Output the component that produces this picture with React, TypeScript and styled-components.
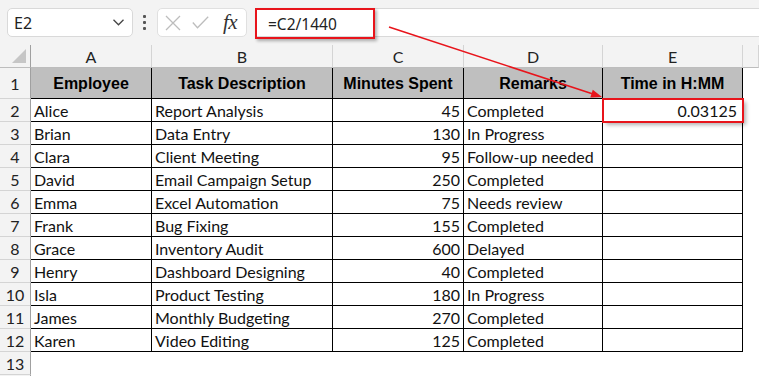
import React from "react";
import styled, { createGlobalStyle } from "styled-components";

const GlobalStyle = createGlobalStyle`
  html, body { margin: 0; padding: 0; background: #fff; }
  body { font-family: "Lato", "Liberation Sans", sans-serif; }
`;

const Page = styled.div`
  position: relative;
  width: 759px;
  height: 376px;
  overflow: hidden;
  background: #fff;
`;

const Toolbar = styled.div`
  display: flex;
  align-items: flex-start;
  height: 45px;
  box-sizing: border-box;
  padding: 8px 0 0 7px;
  background: #f3f3f3;
`;

const NameBox = styled.div`
  width: 126px;
  height: 29px;
  box-sizing: border-box;
  display: flex;
  align-items: center;
  justify-content: space-between;
  padding: 0 8px 0 6px;
  background: #fff;
  border: 1px solid #d9d9d9;
  border-radius: 5px;
  font-family: "Noto Sans", "Open Sans", sans-serif;
  font-size: 16px;
  color: #222;
`;

const Dots = styled.div`
  display: flex;
  flex-direction: column;
  gap: 3px;
  margin: 7px 11px 0 10px;
  span {
    width: 3px;
    height: 3px;
    border-radius: 1px;
    background: #555;
  }
`;

const FxBox = styled.div`
  width: 90px;
  height: 29px;
  box-sizing: border-box;
  display: flex;
  align-items: center;
  padding: 0 0 0 7px;
  gap: 11px;
  background: #fff;
  border: 1px solid #e0e0e0;
  border-radius: 5px;
`;

const Fx = styled.span`
  margin-left: 3px;
  font-family: "Liberation Serif", serif;
  font-style: italic;
  font-size: 21px;
  color: #333;
  letter-spacing: -0.5px;
`;

const FormulaInput = styled.div`
  flex: 1;
  height: 29px;
  margin-left: 8px;
  box-sizing: border-box;
  background: #fff;
  border: 1px solid #d9d9d9;
  border-right: none;
  display: flex;
`;

const FormulaHighlight = styled.div`
  width: 120px;
  height: 31px;
  margin: -1px 0 0 -1px;
  box-sizing: border-box;
  border: 2px solid #e8141b;
  box-shadow: 2px 2px 3px rgba(0, 0, 0, 0.3);
  padding-left: 11px;
  display: flex;
  align-items: center;
  font-family: "Noto Sans", "Open Sans", sans-serif;
  font-size: 15.5px;
  color: #222;
`;

const Sheet = styled.div`
  display: grid;
  grid-template-columns: 31px 121px 181px 131px 139px 140px 1fr;
  grid-template-rows: 23px 31px repeat(13, 23px);
`;

const ColHeader = styled.div<{ $corner?: boolean }>`
  box-sizing: border-box;
  background: #f3f3f3;
  border-right: 1px solid ${(p) => (p.$corner ? "#a0a0a0" : "#d4d4d4")};
  border-bottom: 1px solid #bdbdbd;
  display: flex;
  align-items: center;
  justify-content: center;
  padding-top: 1px;
  font-size: 16px;
  color: #222;
  position: relative;
`;

const RowHeader = styled.div`
  box-sizing: border-box;
  background: #f3f3f3;
  border-right: 1px solid #a0a0a0;
  border-bottom: 1px solid #d4d4d4;
  display: flex;
  align-items: center;
  justify-content: center;
  padding-top: 1px;
  font-size: 16px;
  color: #222;
`;

const Cell = styled.div<{ $head?: boolean; $right?: boolean; $mark?: boolean }>`
  box-sizing: border-box;
  border-right: 1px solid #000;
  border-bottom: 1px solid #000;
  background: ${(p) => (p.$head ? "#bfbfbf" : "#fff")};
  display: flex;
  align-items: center;
  justify-content: ${(p) => (p.$head ? "center" : p.$right ? "flex-end" : "flex-start")};
  padding: ${(p) => (p.$head ? "2px 0 0" : "0 3px")};
  white-space: nowrap;
  overflow: hidden;
  font-family: ${(p) => (p.$head ? '"Liberation Sans", Arial, sans-serif' : '"Lato", sans-serif')};
  font-weight: ${(p) => (p.$head ? 700 : 400)};
  font-size: 16px;
  color: ${(p) => (p.$head ? "#000" : "#111")};
  ${(p) =>
    p.$mark &&
    `
    position: relative;
    z-index: 1;
    overflow: visible;
    outline: 2px solid #e8141b;
    outline-offset: -1px;
    box-shadow: 3px 3px 4px rgba(0, 0, 0, 0.3);
    padding-right: 5px;
  `}
`;

const Blank = styled.div`
  background: #fff;
`;

const Overlay = styled.svg`
  position: absolute;
  top: 0;
  left: 0;
  pointer-events: none;
  z-index: 5;
`;

const columns = ["A", "B", "C", "D", "E"];
const headings = ["Employee", "Task Description", "Minutes Spent", "Remarks", "Time in H:MM"];

const rows: [string, string, number, string][] = [
  ["Alice", "Report Analysis", 45, "Completed"],
  ["Brian", "Data Entry", 130, "In Progress"],
  ["Clara", "Client Meeting", 95, "Follow-up needed"],
  ["David", "Email Campaign Setup", 250, "Completed"],
  ["Emma", "Excel Automation", 75, "Needs review"],
  ["Frank", "Bug Fixing", 155, "Completed"],
  ["Grace", "Inventory Audit", 600, "Delayed"],
  ["Henry", "Dashboard Designing", 40, "Completed"],
  ["Isla", "Product Testing", 180, "In Progress"],
  ["James", "Monthly Budgeting", 270, "Completed"],
  ["Karen", "Video Editing", 125, "Completed"],
];

export default function App() {
  return (
    <Page>
      <GlobalStyle />
      <Toolbar>
        <NameBox>
          <span>E2</span>
          <svg width="11" height="7" viewBox="0 0 11 7">
            <polyline points="0.5,0.8 5.5,5.8 10.5,0.8" fill="none" stroke="#444" strokeWidth="1.3" />
          </svg>
        </NameBox>
        <Dots>
          <span />
          <span />
          <span />
        </Dots>
        <FxBox>
          <svg width="16" height="16" viewBox="0 0 16 16">
            <path d="M1 1 L15 15 M15 1 L1 15" stroke="#bdbdbd" strokeWidth="1.3" fill="none" />
          </svg>
          <svg width="17" height="13" viewBox="0 0 17 13">
            <polyline points="0.8,6.5 5.5,11.8 16.2,0.8" stroke="#bdbdbd" strokeWidth="1.3" fill="none" />
          </svg>
          <Fx>fx</Fx>
        </FxBox>
        <FormulaInput>
          <FormulaHighlight>=C2/1440</FormulaHighlight>
        </FormulaInput>
      </Toolbar>

      <Sheet>
        <ColHeader $corner>
          <svg width="16" height="15" viewBox="0 0 16 15" style={{ position: "absolute", left: 11, bottom: 3 }}>
            <polygon points="15,0 15,14 1,14" fill="#c6c6c6" />
          </svg>
        </ColHeader>
        {columns.map((c) => (
          <ColHeader key={c}>{c}</ColHeader>
        ))}
        <ColHeader />

        <RowHeader>1</RowHeader>
        {headings.map((h) => (
          <Cell key={h} $head>
            {h}
          </Cell>
        ))}
        <Blank />

        {rows.map((r, i) => (
          <React.Fragment key={r[0]}>
            <RowHeader>{i + 2}</RowHeader>
            <Cell>{r[0]}</Cell>
            <Cell>{r[1]}</Cell>
            <Cell $right>{r[2]}</Cell>
            <Cell>{r[3]}</Cell>
            <Cell $right $mark={i === 0}>
              {i === 0 ? (r[2] / 1440).toString() : ""}
            </Cell>
            <Blank />
          </React.Fragment>
        ))}

        <RowHeader>13</RowHeader>
        <Blank />
        <Blank />
        <Blank />
        <Blank />
        <Blank />
        <Blank />
        <RowHeader />
      </Sheet>

      <Overlay width="759" height="376" viewBox="0 0 759 376">
        <line x1="389" y1="27" x2="593" y2="94" stroke="#e8141b" strokeWidth="1.6" />
        <polygon points="602,97 590.3,97.4 592.8,89.8" fill="#e8141b" />
      </Overlay>
    </Page>
  );
}
